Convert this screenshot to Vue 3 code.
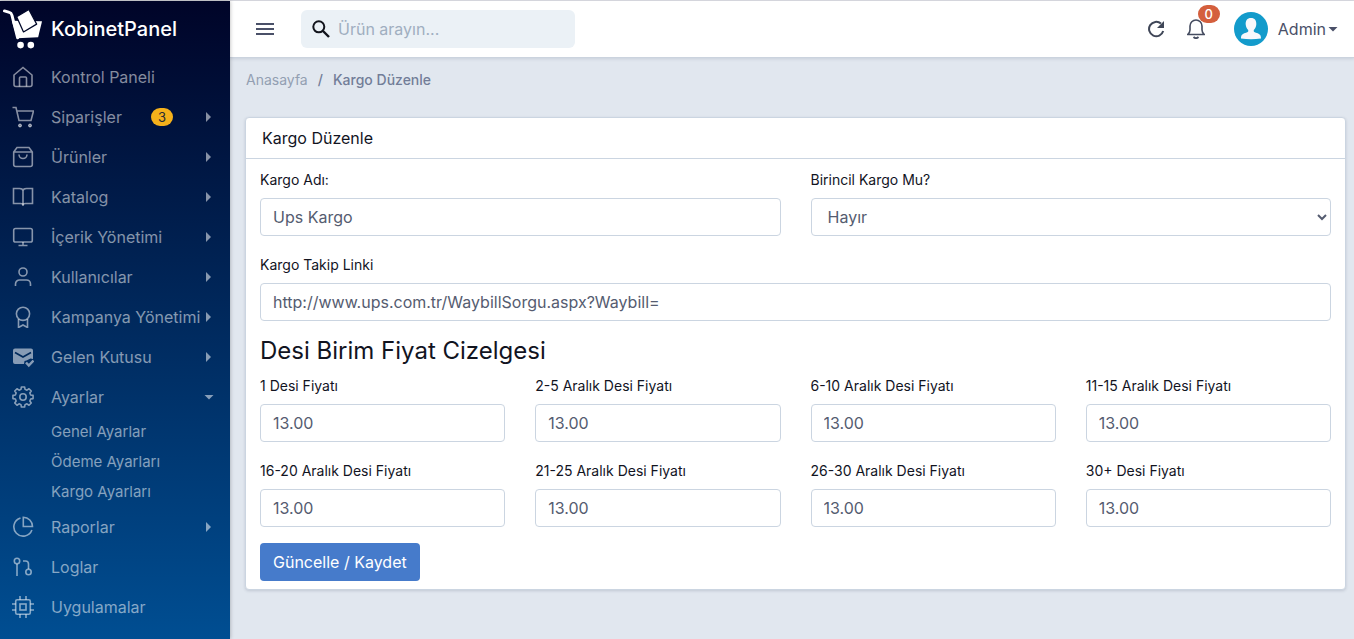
<script setup>
import { ref } from 'vue'

const menu = [
  { label: 'Kontrol Paneli', icon: 'home' },
  { label: 'Siparişler', icon: 'cart', badge: 3, arrow: true },
  { label: 'Ürünler', icon: 'bag', arrow: true },
  { label: 'Katalog', icon: 'book', arrow: true },
  { label: 'İçerik Yönetimi', icon: 'screen', arrow: true },
  { label: 'Kullanıcılar', icon: 'user', arrow: true },
  { label: 'Kampanya Yönetimi', icon: 'award', arrow: true },
  { label: 'Gelen Kutusu', icon: 'mail', arrow: true },
  {
    label: 'Ayarlar',
    icon: 'gear',
    arrow: true,
    open: true,
    children: ['Genel Ayarlar', 'Ödeme Ayarları', 'Kargo Ayarları'],
  },
  { label: 'Raporlar', icon: 'pie', arrow: true },
  { label: 'Loglar', icon: 'branch' },
  { label: 'Uygulamalar', icon: 'chip' },
]

// Eight-toothed cog outline: two tip corners and two root corners per tooth.
function cogPath(teeth = 8, tip = 10.2, root = 7.9) {
  const points = []
  const step = 360 / teeth
  for (let i = 0; i < teeth; i++) {
    for (const [offset, radius] of [[-15, root], [-9, tip], [9, tip], [15, root]]) {
      const angle = ((i * step + offset) * Math.PI) / 180
      points.push(`${(11 + radius * Math.sin(angle)).toFixed(2)} ${(11 - radius * Math.cos(angle)).toFixed(2)}`)
    }
  }
  return `M${points.join('L')}Z`
}

const icons = {
  home: '<path d="M2 9 11 1.500 20 9V18.500a2 2 0 0 1-2 2H4a2 2 0 0 1-2-2Z"/><path d="M7.500 20.500V12a1 1 0 0 1 1-1h5a1 1 0 0 1 1 1v8.500"/>',
  cart: '<path d="M.5 1.500H4L7 14.500H19L21.500 5H5"/><circle cx="8" cy="19.500" r="1.500" fill="currentColor" stroke-width="1"/><circle cx="18" cy="19.500" r="1.500" fill="currentColor" stroke-width="1"/>',
  bag: '<path d="M5 1.500H17L20.300 6V18.500a2 2 0 0 1-2 2H3.700a2 2 0 0 1-2-2V6ZM1.700 6H20.300"/><path d="M7 8.500a4 4 0 0 0 8 0"/>',
  book: '<path d="M1.500 2.500H7.500Q11 2.500 11 5 11 2.500 14.500 2.500H20.500V17.500H13.500Q11 17.500 11 19 11 17.500 8.500 17.500H1.500Z"/><path d="M11 5V20"/>',
  screen: '<rect x="1.700" y="2.500" width="18.600" height="13.500" rx="1.800"/><path d="M11 16v3.500M6.500 19.500h9"/>',
  user: '<circle cx="11" cy="6" r="4"/><path d="M3.500 20V18a4 4 0 0 1 4-4h7a4 4 0 0 1 4 4v2"/>',
  award: '<circle cx="11" cy="7.800" r="6.600"/><path d="M6.500 13V21.500L11 19 15.500 21.500V13"/>',
  mail: '<path d="M1 4.500a2 2 0 0 1 2-2H19a2 2 0 0 1 2 2V13l-2.500-.500-4 2-2 .500-.500 3H3a2 2 0 0 1-2-2Z" fill="currentColor" stroke="none"/><path class="fold" d="M3 6.500 11 11 19 6.500" stroke-width="1.700"/><path d="m14 16.500 2.800 3L21.500 14.500" stroke-width="2.500"/>',
  gear: `<path d="${cogPath()}" stroke-linejoin="round"/><circle cx="11" cy="11" r="3.200"/>`,
  pie: '<path d="M8.500 1.900A9.300 9.300 0 1 0 19.900 14"/><path d="M11.300 1.200V10.500H20.500A9.300 9.300 0 0 0 11.300 1.200Z"/>',
  branch: '<circle cx="5" cy="5" r="2.700"/><path d="M5 8V20M11 5H13.500a3 3 0 0 1 3 3V13"/><circle cx="16.500" cy="16" r="2.700"/>',
  chip: '<rect x="3.700" y="3.700" width="14.600" height="14.600" rx="1.500"/><rect x="8" y="8" width="6" height="6"/><path d="M8 3.700V0M14 3.700V0M8 22v-3.700M14 22v-3.700M3.700 8H0M3.700 14H0M22 8h-3.700M22 14h-3.700"/>',
}

const search = ref('')
const name = ref('Ups Kargo')
const primary = ref('Hayır')
const link = ref('http://www.ups.com.tr/WaybillSorgu.aspx?Waybill=')
const prices = ref([
  { label: '1 Desi Fiyatı', value: '13.00' },
  { label: '2-5 Aralık Desi Fiyatı', value: '13.00' },
  { label: '6-10 Aralık Desi Fiyatı', value: '13.00' },
  { label: '11-15 Aralık Desi Fiyatı', value: '13.00' },
  { label: '16-20 Aralık Desi Fiyatı', value: '13.00' },
  { label: '21-25 Aralık Desi Fiyatı', value: '13.00' },
  { label: '26-30 Aralık Desi Fiyatı', value: '13.00' },
  { label: '30+ Desi Fiyatı', value: '13.00' },
])
</script>

<template>
  <div class="app">
    <aside class="sidebar">
      <a class="brand" href="#">
        <svg class="logo" viewBox="0 0 41 42" aria-hidden="true">
          <path d="M1.500 2.500 6.500 4Q8.500 4.500 9.200 7L15 30" fill="none" stroke="#fff" stroke-width="3" stroke-linecap="round" stroke-linejoin="round" />
          <path d="M9 12.500 40 13 36 29.500 14.500 30.500Z" fill="#fff" />
          <path d="M14 8.500 26.500 1 34.500 16 21 24Z" fill="#fff" stroke="#000829" stroke-width="1.300" stroke-linejoin="round" />
          <circle cx="18" cy="37.500" r="3.400" fill="#fff" /><circle cx="28.500" cy="37.500" r="3.400" fill="#fff" />
        </svg>
        <span>KobinetPanel</span>
      </a>
      <nav>
        <template v-for="item in menu" :key="item.label">
          <a class="item" href="#">
            <svg class="icon" viewBox="0 0 22 22" aria-hidden="true" v-html="icons[item.icon]"></svg>
            <span class="text">{{ item.label }}</span>
            <span v-if="item.badge" class="count">{{ item.badge }}</span>
            <span v-if="item.arrow" class="arrow" :class="{ open: item.open }"></span>
          </a>
          <a v-for="child in item.children" :key="child" class="sub" href="#">{{ child }}</a>
        </template>
      </nav>
    </aside>

    <div class="main">
      <header class="topbar">
        <button class="plain" type="button" aria-label="Menü">
          <svg width="18" height="14" viewBox="0 0 18 14"><path d="M0 2h18M0 7h18M0 12h18" stroke="#4a5068" stroke-width="2" /></svg>
        </button>
        <label class="search">
          <svg width="18" height="18" viewBox="0 0 18 18" fill="none" stroke="#12141c"><circle cx="6.800" cy="6.800" r="5.500" stroke-width="2" /><path d="m11 11 6 6" stroke-width="2.400" /></svg>
          <input v-model="search" type="text" placeholder="Ürün arayın..." aria-label="Ürün arayın" />
        </label>
        <div class="actions">
          <button class="plain" type="button" aria-label="Yenile">
            <svg width="18" height="18" viewBox="0 0 18 18"><path d="M16.200 11A7.200 7.200 0 1 1 14 3.600" fill="none" stroke="#3f4657" stroke-width="2" /><path d="M17 1V8H10Z" fill="#3f4657" /></svg>
          </button>
          <button class="plain bell" type="button" aria-label="Bildirimler">
            <svg width="18" height="20" viewBox="0 0 18 20" fill="none" stroke="#454c60" stroke-width="1.600"><path d="M.7 15.500H17.300Q15 13.500 15 11V7A6 6 0 0 0 3 7v4q0 2.500-2.300 4.500Z" stroke-linejoin="round" /><path d="M6.500 18q2.500 2.500 5 0" stroke-width="1.800" /></svg>
            <span class="alert">0</span>
          </button>
          <button class="plain account" type="button">
            <svg width="34" height="34" viewBox="0 0 34 34" aria-hidden="true"><circle cx="17" cy="17" r="17" fill="#139bcb" /><path d="M17 6c-3.800 0-5.600 2.700-5.300 6.500.2 2.500 1.300 4.400 2.500 5.500.5 1.800-.7 2.500-3 3.100C8.500 21.900 7 23 7 26.500q10 1.500 20 0c0-3.500-1.500-4.600-4.200-5.400-2.300-.6-3.500-1.300-3-3.100 1.200-1.100 2.300-3 2.500-5.500C22.600 8.700 20.800 6 17 6Z" fill="#f8f8fb" /></svg>
            <span>Admin</span>
            <span class="caret"></span>
          </button>
        </div>
      </header>

      <main class="content">
        <nav class="crumbs" aria-label="Sayfa yolu">
          <a href="#">Anasayfa</a><span>/</span><span>Kargo Düzenle</span>
        </nav>
        <section class="card">
          <h1>Kargo Düzenle</h1>
          <form @submit.prevent>
            <div class="grid two">
              <div class="field">
                <label for="name">Kargo Adı:</label>
                <input id="name" v-model="name" type="text" />
              </div>
              <div class="field">
                <label for="primary">Birincil Kargo Mu?</label>
                <select id="primary" v-model="primary">
                  <option>Hayır</option>
                  <option>Evet</option>
                </select>
              </div>
            </div>
            <div class="field">
              <label for="link">Kargo Takip Linki</label>
              <input id="link" v-model="link" type="text" />
            </div>
            <h2>Desi Birim Fiyat Cizelgesi</h2>
            <div class="grid four">
              <div v-for="(price, i) in prices" :key="price.label" class="field">
                <label :for="'price' + i">{{ price.label }}</label>
                <input :id="'price' + i" v-model="price.value" type="text" />
              </div>
            </div>
            <button class="save" type="submit">Güncelle / Kaydet</button>
          </form>
        </section>
      </main>
    </div>
  </div>
</template>

<style>
body {
  margin: 0;
  background: #e1e7ef;
}
</style>

<style scoped>
* {
  box-sizing: border-box;
}
.app {
  display: flex;
  min-height: 100vh;
  border-top: 1px solid #d9dae0;
  font-family: Inter, "Liberation Sans", sans-serif;
  font-size: 16px;
  line-height: 24px;
  color: #12141f;
}
a {
  color: inherit;
  text-decoration: none;
}
input,
select,
button {
  font: inherit;
}
.sidebar {
  flex: 0 0 230px;
  background: linear-gradient(#000428, #004e92);
  box-shadow: 0 0 4px rgba(0, 0, 0, 0.3);
  z-index: 1;
}
.brand {
  display: flex;
  align-items: center;
  gap: 8px;
  height: 56px;
  padding-left: 3px;
  color: #fff;
  font-size: 20px;
  font-weight: 500;
}
.logo {
  width: 40px;
  height: 42px;
}
.item {
  display: flex;
  align-items: center;
  height: 40px;
  padding: 0 16px 0 12px;
  color: rgba(255, 255, 255, 0.53);
}
.icon {
  width: 22px;
  height: 22px;
  margin-right: 17px;
  fill: none;
  stroke: currentColor;
  stroke-width: 1.6;
}
.icon :deep(.fold) {
  stroke: #002a5c;
}
.text {
  white-space: nowrap;
}
.count {
  width: 22px;
  margin-left: 29px;
  border-radius: 9px;
  background: #f5b11b;
  color: #262a34;
  font-size: 13px;
  line-height: 18px;
  text-align: center;
}
.arrow {
  width: 5px;
  height: 10px;
  margin: 0 3px 0 auto;
  background: currentColor;
  clip-path: polygon(0 0, 100% 50%, 0 100%);
}
.arrow.open {
  width: 10px;
  height: 5px;
  margin-right: 0;
  clip-path: polygon(0 0, 100% 0, 50% 100%);
}
.sub {
  display: block;
  padding-left: 51px;
  color: rgba(255, 255, 255, 0.53);
  font-size: 15px;
  line-height: 30px;
}
.main {
  flex: 1;
  min-width: 0;
}
.topbar {
  display: flex;
  align-items: center;
  height: 57px;
  padding: 0 16px 0 26px;
  background: #fff;
  border-bottom: 1px solid #cbd3de;
  box-shadow: 0 1px 3px rgba(60, 70, 100, 0.15);
}
.plain {
  display: flex;
  align-items: center;
  padding: 0;
  border: 0;
  background: none;
  color: #4a5068;
}
.search {
  display: flex;
  align-items: center;
  gap: 8px;
  width: 274px;
  height: 38px;
  margin-left: 27px;
  padding: 0 11px;
  border-radius: 6px;
  background: #ebf1f6;
}
.search input {
  flex: 1;
  min-width: 0;
  padding: 0;
  border: 0;
  outline: 0;
  background: none;
}
.search input::placeholder {
  color: #a0aec0;
  opacity: 1;
}
.actions {
  display: flex;
  align-items: center;
  gap: 22px;
  margin-left: auto;
}
.bell {
  position: relative;
}
.alert {
  position: absolute;
  top: -14px;
  left: 11px;
  width: 22px;
  border-radius: 9px;
  background: #d45f3d;
  color: #fff;
  font-size: 13px;
  font-weight: 500;
  line-height: 18px;
}
.account {
  margin-left: 7px;
}
.account svg {
  margin-right: 10px;
}
.caret {
  width: 10px;
  height: 5px;
  margin-left: 2px;
  background: currentColor;
  clip-path: polygon(0 0, 100% 0, 50% 100%);
}
.content {
  padding: 11px 8px 16px 15px;
}
.crumbs {
  display: flex;
  gap: 10px;
  margin: 0 0 27px 1px;
  color: #727d98;
  font-size: 14px;
  line-height: 21px;
  font-weight: 500;
}
.crumbs a {
  color: #939fb2;
  font-weight: 400;
}
.card {
  border: 1px solid #cbd5e1;
  border-radius: 4px;
  background: #fff;
  box-shadow: 0 1px 3px rgba(50, 60, 90, 0.18);
}
.card h1 {
  margin: 0;
  padding: 8px 16px;
  border-bottom: 1px solid #cbd5e1;
  font-size: 16px;
  font-weight: 400;
  line-height: 24px;
}
form {
  padding: 8px 14px;
}
.grid {
  display: grid;
  column-gap: 30px;
}
.two {
  grid-template-columns: repeat(2, 1fr);
}
.four {
  grid-template-columns: repeat(4, 1fr);
}
.field {
  margin-bottom: 16px;
}
.field label {
  display: block;
  margin-bottom: 5px;
  font-size: 14px;
  line-height: 26px;
}
.field input,
.field select {
  display: block;
  width: 100%;
  height: 38px;
  padding: 6px 12px;
  border: 1px solid #cbd5e1;
  border-radius: 4px;
  background: #fff;
  color: #555c70;
}
h2 {
  margin: 0 0 8px;
  font-size: 24px;
  font-weight: 400;
  line-height: 28px;
}
.save {
  height: 38px;
  padding: 0 13px;
  border: 0;
  border-radius: 4px;
  background: #467bcb;
  color: #fff;
}
</style>
